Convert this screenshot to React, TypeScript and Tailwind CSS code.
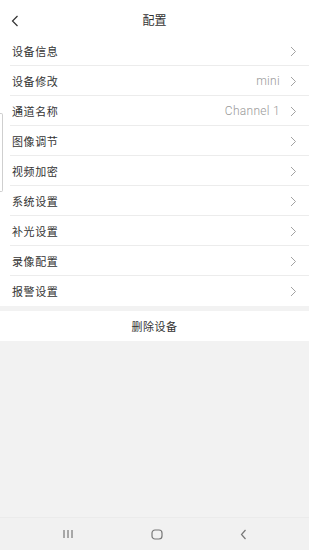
const items: { label: string; value?: string }[] = [
  { label: "设备信息" },
  { label: "设备修改", value: "mini" },
  { label: "通道名称", value: "Channel 1" },
  { label: "图像调节" },
  { label: "视频加密" },
  { label: "系统设置" },
  { label: "补光设置" },
  { label: "录像配置" },
  { label: "报警设置" },
];

const font = { fontFamily: '"Noto Sans CJK SC", "Noto Sans", sans-serif' };

function Chevron() {
  return (
    <svg width="7" height="11" viewBox="0 0 7 11" fill="none" className="ml-[10px]">
      <path d="M1 1l4.5 4.5L1 10" stroke="#a3a3a3" strokeWidth="1" />
    </svg>
  );
}

export default function App() {
  return (
    <div className="relative w-[309px] h-[550px] flex flex-col bg-[#f2f2f2] overflow-hidden" style={font}>
      <div className="h-[36px] bg-white flex items-center relative">
        <svg width="8" height="12" viewBox="0 0 8 12" fill="none" className="absolute left-[11px] top-[15px]">
          <path d="M6.5 1L1.5 6l5 5" stroke="#333" strokeWidth="1.2" />
        </svg>
        <div className="flex-1 text-center text-[12px] text-[#333] pt-[4px]">配置</div>
      </div>
      <div className="bg-white">
        {items.map((it, i) => (
          <div key={it.label} className="h-[30px] flex items-center pl-[12px] pr-[12px] relative">
            <span className="text-[11px] text-[#333] flex-1 tracking-[0.6px]">{it.label}</span>
            {it.value && (
              <span className="text-[12px] font-light text-[#999] font-['Roboto',sans-serif] tracking-[0.3px]">{it.value}</span>
            )}
            <Chevron />
            {i < items.length - 1 && (
              <div className="absolute left-[10px] right-0 bottom-0 h-px bg-[#ececec]" />
            )}
          </div>
        ))}
      </div>
      <div className="h-[5px]" />
      <div className="h-[30px] bg-white flex items-center justify-center text-[11px] text-[#333] tracking-[0.5px]">删除设备</div>
      <div className="flex-1" />
      <div className="h-[33px] bg-[#f1f1f1] flex items-center justify-between px-[62px] border-t border-[#ebebeb]">
        <svg width="12" height="10" viewBox="0 0 12 10" fill="none">
          <path d="M2 1v8M6 1v8M10 1v8" stroke="#777" strokeWidth="1.2" />
        </svg>
        <svg width="12" height="11" viewBox="0 0 12 11" fill="none">
          <rect x="1" y="1" width="10" height="9" rx="3" stroke="#777" strokeWidth="1.2" />
        </svg>
        <svg width="7" height="11" viewBox="0 0 7 11" fill="none">
          <path d="M5.5 1L1.5 5.5l4 4.5" stroke="#777" strokeWidth="1.2" />
        </svg>
      </div>
      <div className="absolute left-0 top-[113px] w-[3px] h-[79px] border border-l-0 border-[#cfcfcf] rounded-r-[2px]" />
    </div>
  );
}
